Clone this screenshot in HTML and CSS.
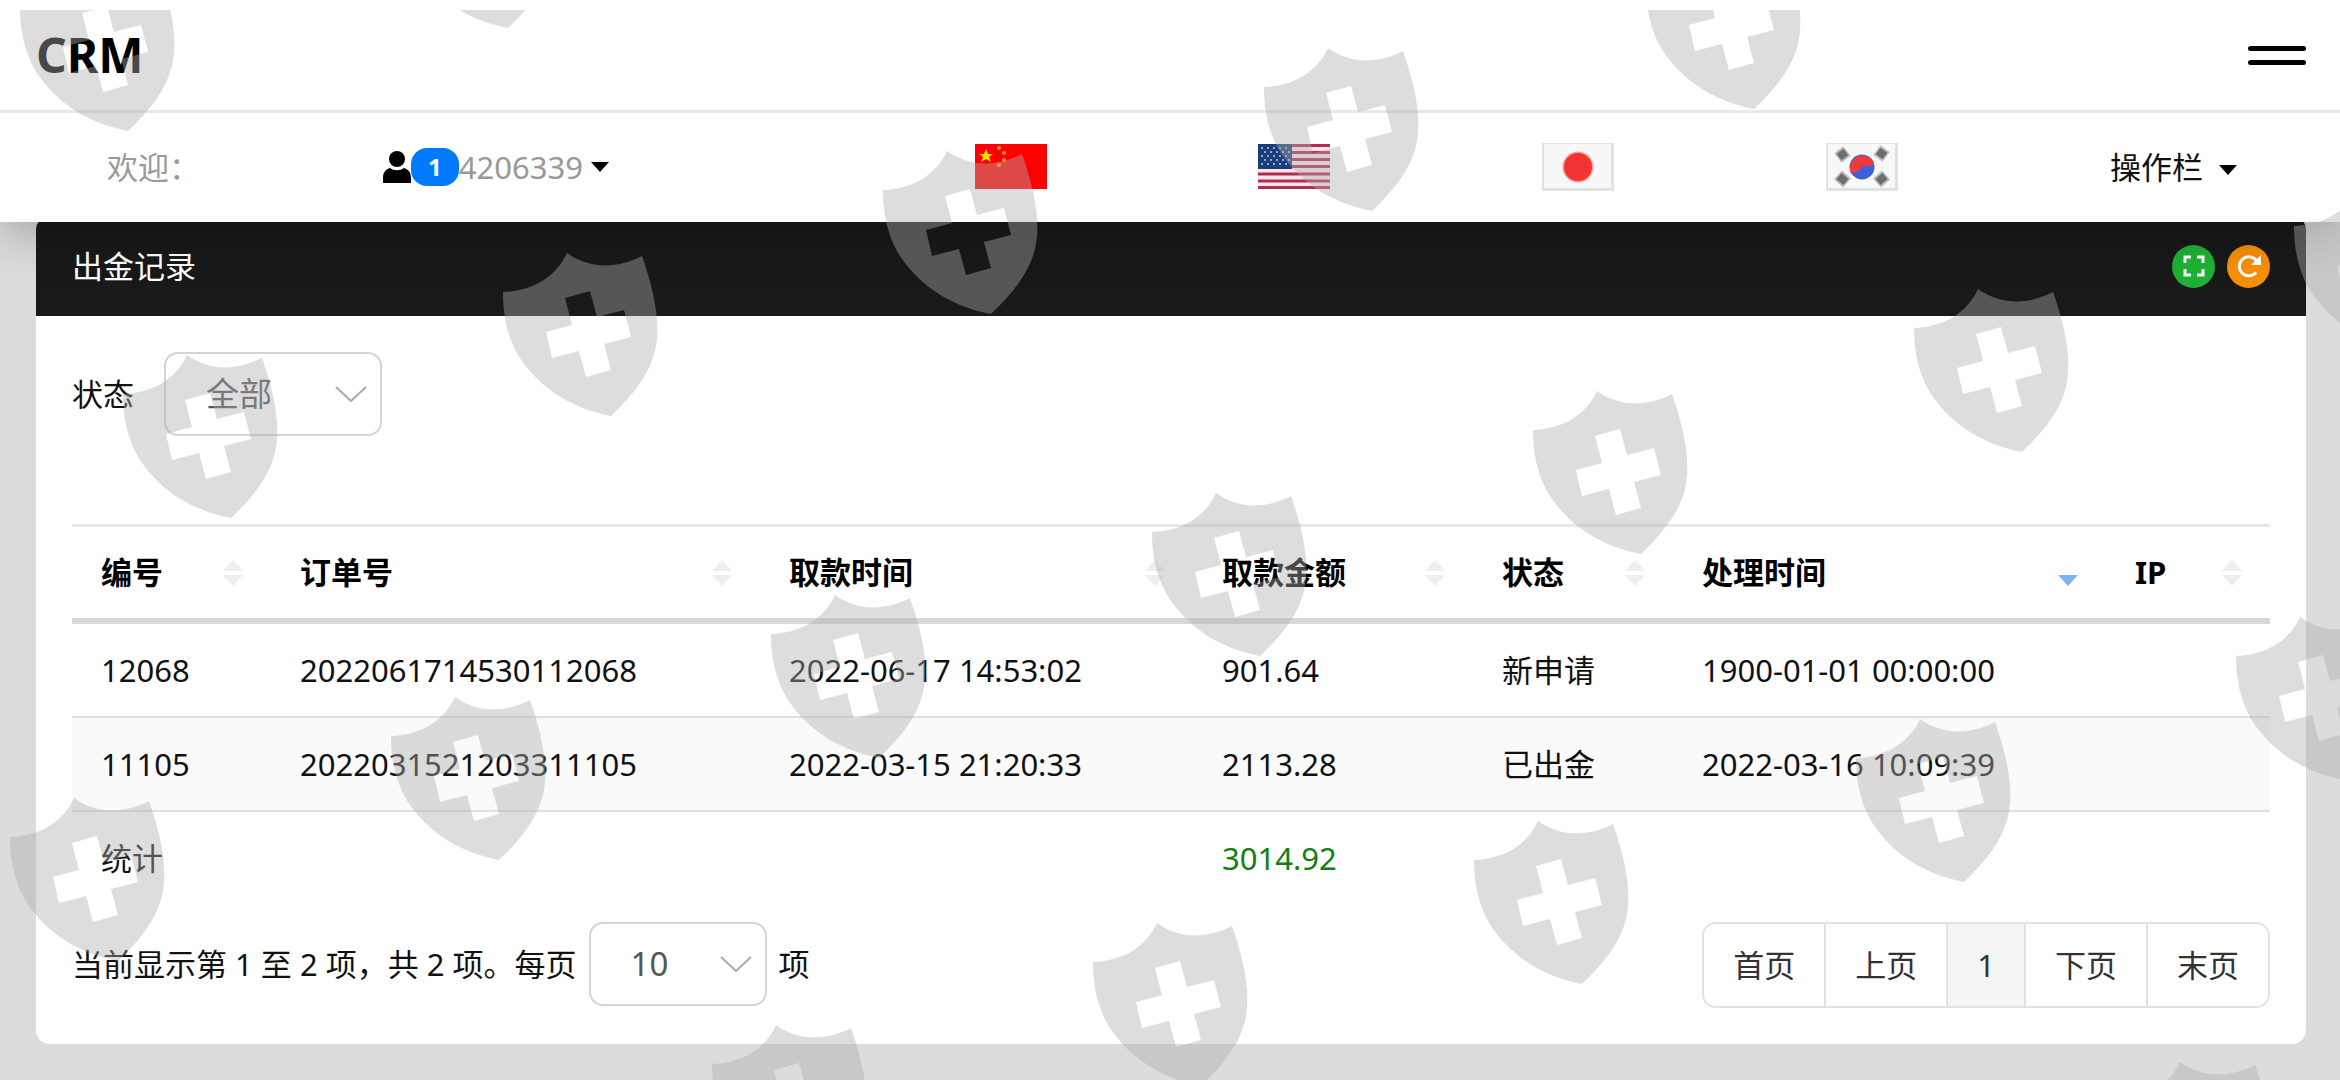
FILE: index.html
```
<!DOCTYPE html>
<html lang="zh-CN">
<head>
	<meta charset="utf-8">
	<title>CRM</title>
	<link rel="stylesheet" href="styles.css">
</head>
<body>
	<header class="topbar">
		<h1 class="brand">CRM</h1>
		<button class="menu-toggle" type="button" aria-label="菜单"><span></span><span></span></button>
	</header>

	<nav class="navbar">
		<span class="welcome">欢迎：</span>
		<a class="user" href="#">
			<svg class="user-icon" viewBox="0 0 28 32"><ellipse cx="14" cy="8" rx="8" ry="8"/><path d="M0 32v-5c0-6 3-9 7-10 4 3 10 3 14 0 4 1 7 4 7 10v5z"/></svg>
			<span class="badge">1</span>
			<span>4206339</span>
			<i class="caret"></i>
		</a>
		<a class="flag" href="#" aria-label="中文">
			<svg viewBox="0 0 72 48">
				<rect y="1" width="72" height="45" fill="#f00"/>
				<path fill="#ffd800" d="M11 6l2 5h5l-4 3 2 5-5-3-5 3 2-5-4-3h5z"/>
				<g fill="#f89a1c"><circle cx="24" cy="5" r="2"/><circle cx="29" cy="10" r="2"/><circle cx="29" cy="17" r="2"/><circle cx="24" cy="22" r="2"/></g>
			</svg>
		</a>
		<a class="flag" href="#" aria-label="English">
			<svg viewBox="0 0 72 48">
				<rect y="1" width="72" height="45" fill="#fbe6ec"/>
				<path stroke="#b22c50" stroke-width="3" d="M0 2.500h72M0 9.500h72M0 16.500h72M0 23.500h72M0 31h72M0 38h72M0 44.500h72"/>
				<rect y="1" width="34" height="25" fill="#1c3f7c"/>
				<path stroke="#8fa5cb" stroke-width="2" stroke-dasharray="2 4" d="M3 5h30M6 9h26M3 13h30M6 17h26M3 21h30"/>
			</svg>
		</a>
		<a class="flag" href="#" aria-label="日本語">
			<svg viewBox="0 0 72 48">
				<rect width="72" height="48" fill="#e2e2e2"/>
				<rect x="2" y="1" width="67" height="44" fill="#f8f8f8"/>
				<circle cx="36" cy="24" r="15.500" fill="#f9a0a0"/>
				<circle cx="36" cy="24" r="14" fill="#f23434"/>
			</svg>
		</a>
		<a class="flag" href="#" aria-label="한국어">
			<svg viewBox="0 0 72 48">
				<rect width="72" height="48" fill="#e2e2e2"/>
				<rect x="2" y="1" width="67" height="44" fill="#f8f8f8"/>
				<circle cx="36" cy="24" r="12.500" fill="#3a62d8"/>
				<path fill="#ee3a3e" d="M25 30a12.500 12.500 0 1 1 23-10c-4 6-9 1-13 5-3 4-7 6-10 5z"/>
				<path stroke="#bbb" stroke-width="12" d="M12 15l9-7M51 7l9 7M12 32l9 8M51 40l9-8"/>
				<path stroke="#6a6f6e" stroke-width="8" d="M13 14l7-5M52 8l7 5M13 33l7 6M52 39l7-6"/>
			</svg>
		</a>
		<a class="actions" href="#">操作栏 <i class="caret"></i></a>
	</nav>

	<main class="card">
		<div class="card-header">
			<h2>出金记录</h2>
			<div class="tools">
				<button class="tool green" type="button" aria-label="全屏">
					<svg viewBox="0 0 24 24"><path d="M3 9V3h6M15 3h6v6M21 15v6h-6M9 21H3v-6"/></svg>
				</button>
				<button class="tool orange" type="button" aria-label="刷新">
					<svg viewBox="0 0 24 24"><path d="M19 18.500a9.500 9.500 0 1 1 1-11"/><path class="tip" d="M24 1v10H14z"/></svg>
				</button>
			</div>
		</div>

		<div class="card-body">
			<div class="filter">
				<label for="status">状态</label>
				<span class="select-box status-box">
					<select id="status"><option>全部</option></select>
					<svg viewBox="0 0 32 16"><path d="M1 1l15 14L31 1"/></svg>
				</span>
			</div>

			<table class="records">
				<colgroup>
					<col class="c-id"><col class="c-order"><col class="c-time"><col class="c-amount"><col class="c-status"><col class="c-time"><col class="c-ip">
				</colgroup>
				<thead>
					<tr>
						<th>编号<i class="sort"></i></th>
						<th>订单号<i class="sort"></i></th>
						<th>取款时间<i class="sort"></i></th>
						<th>取款金额<i class="sort"></i></th>
						<th>状态<i class="sort"></i></th>
						<th>处理时间<i class="sort desc"></i></th>
						<th>IP<i class="sort"></i></th>
					</tr>
				</thead>
				<tbody>
					<tr>
						<td>12068</td>
						<td>2022061714530112068</td>
						<td>2022-06-17 14:53:02</td>
						<td>901.64</td>
						<td>新申请</td>
						<td>1900-01-01 00:00:00</td>
						<td></td>
					</tr>
					<tr>
						<td>11105</td>
						<td>2022031521203311105</td>
						<td>2022-03-15 21:20:33</td>
						<td>2113.28</td>
						<td>已出金</td>
						<td>2022-03-16 10:09:39</td>
						<td></td>
					</tr>
				</tbody>
				<tfoot>
					<tr>
						<td>统计</td>
						<td></td>
						<td></td>
						<td class="total">3014.92</td>
						<td></td>
						<td></td>
						<td></td>
					</tr>
				</tfoot>
			</table>

			<div class="table-footer">
				<div class="page-info">
					<label for="page-size">当前显示第 1 至 2 项，共 2 项。每页</label>
					<span class="select-box size-box">
						<select id="page-size"><option>10</option></select>
						<svg viewBox="0 0 32 16"><path d="M1 1l15 14L31 1"/></svg>
					</span>
					<span>项</span>
				</div>
				<div class="pagination">
					<button type="button">首页</button>
					<button type="button">上页</button>
					<button type="button" class="active">1</button>
					<button type="button">下页</button>
					<button type="button">末页</button>
				</div>
			</div>
		</div>
	</main>

	<!-- shield watermark -->
	<svg class="watermark" aria-hidden="true">
		<defs>
			<path id="shield" fill-rule="evenodd" d="M0 39C30 38 53 24 64 0C86 16 114 16 139 3C152 40 158 72 152 98C146 122 130 142 108 163C72 156 38 138 15 102C4 82 0 62 0 39zM62 45L69 72L43 79L49 105L76 98L83 124L108 117L101 91L128 84L121 57L94 64L87 38z"/>
		</defs>
		<use href="#shield" x="20" y="-42"/>
		<use href="#shield" x="400" y="-145"/>
		<use href="#shield" x="1646" y="-64"/>
		<use href="#shield" x="1264" y="38"/>
		<use href="#shield" x="883" y="141"/>
		<use href="#shield" x="503" y="243"/>
		<use href="#shield" x="123" y="345"/>
		<use href="#shield" x="2294" y="177"/>
		<use href="#shield" x="1914" y="279"/>
		<use href="#shield" x="1533" y="381"/>
		<use href="#shield" x="1152" y="483"/>
		<use href="#shield" x="771" y="585"/>
		<use href="#shield" x="391" y="687"/>
		<use href="#shield" x="10" y="788"/>
		<use href="#shield" x="2236" y="607"/>
		<use href="#shield" x="1856" y="709"/>
		<use href="#shield" x="1474" y="811"/>
		<use href="#shield" x="1093" y="913"/>
		<use href="#shield" x="712" y="1015"/>
		<use href="#shield" x="2116" y="1052"/>
	</svg>
</body>
</html>
```
FILE: styles.css
```
* {
	box-sizing: border-box;
}

body {
	margin: 0;
	min-height: 100vh;
	position: relative;
	overflow-x: hidden;
	background-color: #dcdcdc;
	color: #111;
	font-family: "Noto Sans", "Noto Sans CJK SC", sans-serif;
	font-size: 31px;
	line-height: 44px;
}

button, select {
	font-family: inherit;
	font-size: inherit;
	line-height: inherit;
	color: inherit;
}

a {
	color: inherit;
	text-decoration: none;
}

.topbar {
	position: relative;
	z-index: 2;
	display: flex;
	justify-content: space-between;
	align-items: center;
	height: 113px;
	padding: 0 34px 0 36px;
	background-color: #fff;
	border-bottom: 3px solid #e8e8e8;
}

.brand {
	margin: 0;
	font-size: 48px;
	color: #000;
}

.menu-toggle {
	display: flex;
	flex-direction: column;
	gap: 9px;
	width: 58px;
	padding: 0;
	border: none;
	background: none;
}

.menu-toggle span {
	height: 5px;
	border-radius: 3px;
	background-color: #000;
}

.navbar {
	position: relative;
	z-index: 1;
	display: grid;
	grid-template-columns: 276fr 592fr repeat(4, 284fr) 124fr;
	align-items: center;
	height: 109px;
	padding: 0 103px 2px 107px;
	background-color: #fff;
	box-shadow: 0 8px 50px rgba(0, 0, 0, 0.3);
}

.welcome, .user {
	color: #999;
}

.user {
	display: flex;
	align-items: center;
}

.user-icon {
	width: 28px;
	height: 32px;
	fill: #000;
}

.badge {
	width: 48px;
	height: 38px;
	border-radius: 16px;
	background-color: #007bff;
	color: #fff;
	font-size: 24px;
	font-weight: bold;
	line-height: 38px;
	text-align: center;
}

.caret {
	display: inline-block;
	margin-left: 8px;
	border: 9px solid transparent;
	border-top: 10px solid #000;
	border-bottom: 0;
	vertical-align: middle;
}

.flag svg {
	display: block;
	width: 72px;
	height: 48px;
}

.actions {
	white-space: nowrap;
}

.card {
	margin: -6px 34px 34px 36px;
	border-radius: 14px;
	background-color: #fff;
	overflow: hidden;
}

.card-header {
	display: flex;
	justify-content: space-between;
	align-items: center;
	height: 100px;
	padding: 0 36px;
	background-color: #191919;
	color: #fff;
}

.card-header h2 {
	margin: 0;
	font-size: 31px;
	font-weight: normal;
}

.tools {
	display: flex;
	gap: 12px;
}

.tool {
	display: flex;
	justify-content: center;
	align-items: center;
	width: 43px;
	height: 43px;
	padding: 0;
	border: none;
	border-radius: 50%;
}

.tool svg {
	width: 24px;
	height: 24px;
	fill: none;
	stroke: #fff;
	stroke-width: 3px;
}

.tool .tip {
	fill: #fff;
	stroke: none;
}

.green {
	background-color: #1fb135;
}

.orange {
	background-color: #f78f08;
}

.card-body {
	padding: 36px;
}

.filter {
	display: flex;
	align-items: center;
	gap: 30px;
	margin-bottom: 88px;
}

.select-box {
	position: relative;
	display: inline-block;
	height: 84px;
}

.select-box select {
	width: 100%;
	height: 100%;
	padding: 0 40px;
	border: 2px solid #d4d4d4;
	border-radius: 14px;
	background: none;
	color: #555;
	font-size: 33px;
	appearance: none;
}

.select-box svg {
	position: absolute;
	top: 34px;
	right: 15px;
	width: 32px;
	height: 16px;
	fill: none;
	stroke: #aaa;
	stroke-width: 2px;
	pointer-events: none;
}

.status-box {
	width: 218px;
}

.size-box {
	width: 178px;
}

.records {
	width: 100%;
	table-layout: fixed;
	border-collapse: separate;
	border-spacing: 0;
	border-top: 3px solid #e8e8e8;
}

.c-id { width: 199px; }
.c-order { width: 489px; }
.c-time { width: 433px; }
.c-amount { width: 280px; }
.c-status { width: 200px; }
.c-ip { width: 164px; }

.records th,
.records td {
	padding: 24px 28px 24px 29px;
	text-align: left;
	white-space: nowrap;
}

.records th {
	position: relative;
	padding-top: 23px;
	border-bottom: 6px solid #d8d8d8;
	color: #000;
}

.records tbody td {
	border-bottom: 2px solid #e0e0e0;
}

.records tbody tr:nth-child(even) {
	background-color: #fafafa;
}

.records .total {
	color: #108010;
}

.sort::before,
.sort::after {
	content: "";
	position: absolute;
	right: 28px;
	border: 10px solid transparent;
}

.sort::before {
	top: 33px;
	border-top: 0;
	border-bottom: 11px solid #eee;
}

.sort::after {
	top: 48px;
	border-bottom: 0;
	border-top: 11px solid #eee;
}

.sort.desc::before {
	border-bottom-color: #fcfcfc;
}

.sort.desc::after {
	border-top-color: #7db3f2;
}

.table-footer {
	display: flex;
	justify-content: space-between;
	align-items: flex-start;
	margin-top: 18px;
}

.page-info {
	display: flex;
	align-items: center;
	gap: 12px;
}

.pagination {
	display: flex;
	border: 2px solid #e2e2e2;
	border-radius: 14px;
	overflow: hidden;
}

.pagination button {
	height: 82px;
	padding: 0 29px;
	border: none;
	border-left: 2px solid #e2e2e2;
	background-color: #fff;
	color: #333;
}

.pagination button:first-child {
	border-left: none;
}

.pagination .active {
	background-color: #f4f4f4;
}

.watermark {
	position: absolute;
	top: 10px;
	left: 0;
	width: 100%;
	height: calc(100% - 10px);
	z-index: 3;
	overflow: hidden;
	fill: #aeaeae;
	opacity: 0.41;
	pointer-events: none;
}
```
